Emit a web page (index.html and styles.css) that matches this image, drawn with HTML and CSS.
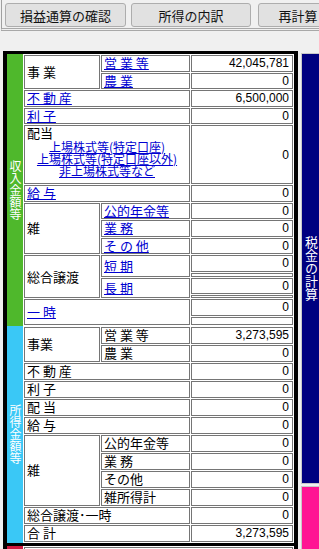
FILE: index.html
```html
<!DOCTYPE html>
<html lang="ja">
<head>
<meta charset="UTF-8">
<meta name="viewport" content="width=device-width, initial-scale=1.0">
<title>所得金額等</title>
<link rel="stylesheet" href="styles.css">
</head>
<body>
<div class="toolbar">
  <button class="btn btn-wide">損益通算の確認</button>
  <button class="btn btn-mid">所得の内訳</button>
  <button class="btn btn-narrow">再計算</button>
</div>
<div class="content">
  <div class="frame">
    <!-- 収入金額等 -->
    <div class="section">
      <div class="band band-income"><span>収入金額等</span></div>
      <table class="grid grid-in">
        <colgroup><col class="c1"><col class="c2"><col class="c3"></colgroup>
        <tr><td rowspan="2">事 業</td><td><a href="#">営 業 等</a></td><td class="num">42,045,781</td></tr>
        <tr><td><a href="#">農 業</a></td><td class="num">0</td></tr>
        <tr><td colspan="2"><a href="#">不 動 産</a></td><td class="num">6,500,000</td></tr>
        <tr><td colspan="2"><a href="#">利 子</a></td><td class="num">0</td></tr>
        <tr>
          <td colspan="2" class="div-cell">配当
            <div class="div-links">
              <a href="#">上場株式等(特定口座)</a>
              <a href="#">上場株式等(特定口座以外)</a>
              <a href="#">非上場株式等など</a>
            </div>
          </td>
          <td class="num">0</td>
        </tr>
        <tr><td colspan="2"><a href="#">給 与</a></td><td class="num">0</td></tr>
        <tr><td rowspan="3">雑</td><td><a href="#">公的年金等</a></td><td class="num">0</td></tr>
        <tr><td><a href="#">業 務</a></td><td class="num">0</td></tr>
        <tr><td><a href="#">そ の 他</a></td><td class="num">0</td></tr>
        <tr><td rowspan="4">総合譲渡</td><td rowspan="2"><a href="#">短 期</a></td><td class="num">0</td></tr>
        <tr class="thin"><td></td></tr>
        <tr><td rowspan="2"><a href="#">長 期</a></td><td class="num">0</td></tr>
        <tr class="thin thin-sm"><td></td></tr>
        <tr><td colspan="2" rowspan="2"><a href="#">一 時</a></td><td class="num">0</td></tr>
        <tr class="thin thin-lg"><td></td></tr>
      </table>
    </div>
    <!-- 所得金額等 -->
    <div class="section">
      <div class="band band-amount"><span>所得金額等</span></div>
      <table class="grid grid-out">
        <colgroup><col class="c1"><col class="c2"><col class="c3"></colgroup>
        <tr><td rowspan="2">事業</td><td>営 業 等</td><td class="num">3,273,595</td></tr>
        <tr><td>農 業</td><td class="num">0</td></tr>
        <tr><td colspan="2">不 動 産</td><td class="num">0</td></tr>
        <tr><td colspan="2">利 子</td><td class="num">0</td></tr>
        <tr><td colspan="2">配 当</td><td class="num">0</td></tr>
        <tr><td colspan="2">給 与</td><td class="num">0</td></tr>
        <tr><td rowspan="4">雑</td><td>公的年金等</td><td class="num">0</td></tr>
        <tr><td>業 務</td><td class="num">0</td></tr>
        <tr><td>その他</td><td class="num">0</td></tr>
        <tr><td>雑所得計</td><td class="num">0</td></tr>
        <tr><td colspan="2">総合譲渡･一時</td><td class="num">0</td></tr>
        <tr><td colspan="2">合 計</td><td class="num">3,273,595</td></tr>
      </table>
    </div>
    <!-- 分離課税 -->
    <div class="section section-next">
      <div class="band band-sep"></div>
      <table class="grid grid-out">
        <colgroup><col class="c1"><col class="c2"><col class="c3"></colgroup>
        <tr><td colspan="3"><a href="#">分離課税の所得金額等</a></td></tr>
      </table>
    </div>
  </div>
  <div class="side">
    <div class="tab tab-tax"><span>税金の計算</span></div>
    <div class="tab tab-pink"></div>
  </div>
</div>
</body>
</html>
```

FILE: styles.css
```css
html, body {
  margin: 0;
  height: 100%;
  overflow: hidden;
}
body {
  background: #f0f0f0;
  font-family: "Noto Sans CJK JP", sans-serif;
  font-size: 13px;
  color: #000;
}
.toolbar {
  display: flex;
  margin-left: 1px;
  padding: 3px 0 1px 3px;
  border-left: 1px solid #a0a0a0;
  border-bottom: 3px double #a8a8a8;
  overflow: hidden;
  white-space: nowrap;
}
.btn {
  flex: none;
  height: 24px;
  padding: 0;
  margin-right: 5px;
  border: 1px solid #adadad;
  border-radius: 3px;
  background: #e1e1e1;
  font-family: inherit;
  font-size: 13px;
  color: #111;
}
.btn-wide { width: 121px; }
.btn-mid { width: 120px; margin-right: 7px; }
.btn-narrow { width: 80px; }

.content {
  display: flex;
  align-items: flex-start;
  margin-top: 20px;
}
.frame {
  flex: none;
  width: 295px;
  box-sizing: border-box;
  margin-left: 3px;
  padding: 3px 4px 0;
  background: #000;
}
.section {
  display: flex;
}
.section-next {
  margin-top: 3px;
}
.band {
  flex: none;
  width: 16px;
  display: flex;
  align-items: center;
  justify-content: center;
}
.band span {
  writing-mode: vertical-rl;
  text-orientation: upright;
  color: #fff;
  font-size: 12px;
  line-height: 16px;
}
.band-income { background: #4fb82c; }
.band-amount { background: #3ac8f6; }
.band-sep { background: #d01840; }

.grid {
  width: 271px;
  table-layout: fixed;
  border-collapse: separate;
  border-spacing: 1px;
  background: #fff;
}
.c1 { width: 76px; }
.c2 { width: 89px; }
.c3 { width: 102px; }
.grid td {
  padding: 0 2px;
  border: 1px solid #757575;
  line-height: 14px;
  white-space: nowrap;
  vertical-align: middle;
}
.grid-in td { height: 14.5px; }
.grid-out td { height: 15px; }
.grid a {
  color: #0000d0;
  text-decoration: underline;
}
.num {
  text-align: right;
  padding-right: 3px !important;
  font-family: "Liberation Sans", sans-serif;
  font-size: 12px;
}
.grid td.div-cell {
  height: 57px;
  vertical-align: top;
}
.div-links {
  margin-top: 1px;
  text-align: center;
  font-size: 12px;
  line-height: 12px;
}
.div-links a {
  display: block;
}
.grid .thin td {
  height: 2px;
  line-height: 0;
  font-size: 0;
}
.grid .thin-sm td { height: 1px; }
.grid .thin-lg td { height: 6px; }

.side {
  flex: none;
  margin-left: 3px;
  margin-top: 2px;
}
.tab {
  width: 20px;
  box-sizing: border-box;
  border: 1px solid #c8c8c8;
}
.tab-tax {
  height: 431px;
  background: #000080;
  display: flex;
  align-items: center;
  justify-content: center;
}
.tab-tax span {
  writing-mode: vertical-rl;
  text-orientation: upright;
  color: #fff;
  font-size: 13px;
  line-height: 16px;
}
.tab-pink {
  height: 100px;
  margin-top: 2px;
  background: #ff1493;
}
```
